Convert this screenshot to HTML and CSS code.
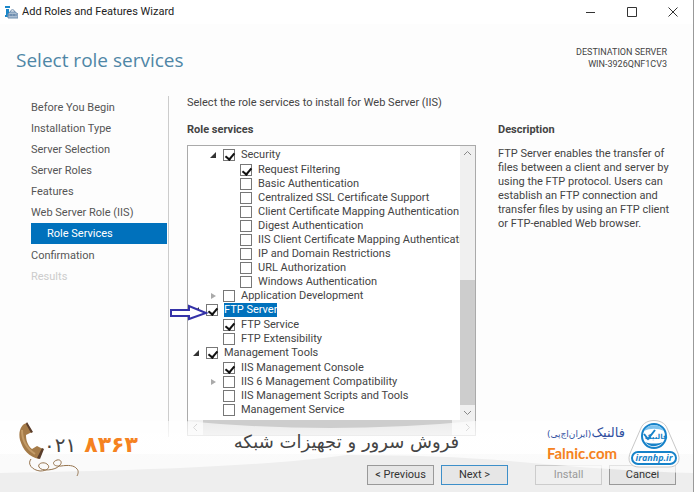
FILE: index.html
```html
<!DOCTYPE html>
<html lang="en">
<head>
  <meta charset="UTF-8" />
  <meta name="viewport" content="width=device-width, initial-scale=1" />
  <title>Add Roles and Features Wizard</title>
  <link rel="stylesheet" href="styles.css">
</head>
<body>
  <div class="window">
    <div class="titlebar">
      <svg class="app-icon" width="14" height="14" viewBox="0 0 14 14">
        <path d="M1 1h5v2H1zM2 4h3v8H1V10h1z" fill="#1b87c9" />
        <path d="M4 9l2-2h5l3 2v4H4z" fill="#a9bdd2" stroke="#6f8fb0" />
        <path d="M6 7c1-3 4-3 5 0M4 10h9M7 9v2M10 9v2" stroke="#5d7fa3" fill="none" />
      </svg>
      <span class="app-name">Add Roles and Features Wizard</span>
      <div class="controls">
        <button type="button" aria-label="Minimize"><svg width="10" height="10" viewBox="0 0 10 10"><path d="M0 5.500h9" /></svg></button>
        <button type="button" aria-label="Maximize"><svg width="10" height="10" viewBox="0 0 10 10"><path d="M.5.5h9v9h-9z" /></svg></button>
        <button type="button" aria-label="Close"><svg width="10" height="10" viewBox="0 0 10 10"><path d="M.5.5l9 9M9.500.5l-9 9" /></svg></button>
      </div>
    </div>

    <header class="header">
      <h1>Select role services</h1>
      <p class="server">DESTINATION SERVER<br>WIN-3926QNF1CV3</p>
    </header>

    <main class="content">
      <nav class="steps">
        <a href="#">Before You Begin</a>
        <a href="#">Installation Type</a>
        <a href="#">Server Selection</a>
        <a href="#">Server Roles</a>
        <a href="#">Features</a>
        <a href="#">Web Server Role (IIS)</a>
        <a href="#" class="current">Role Services</a>
        <a href="#">Confirmation</a>
        <a href="#" class="disabled">Results</a>
      </nav>

      <section class="roles">
        <p class="intro">Select the role services to install for Web Server (IIS)</p>
        <h2>Role services</h2>
        <div class="listbox">
          <ul class="tree">
            <li class="level-2">
              <div class="row"><span class="arrow open"></span><label><input type="checkbox" checked><span>Security</span></label></div>
              <ul>
                <li><label><input type="checkbox" checked><span>Request Filtering</span></label></li>
                <li><label><input type="checkbox"><span>Basic Authentication</span></label></li>
                <li><label><input type="checkbox"><span>Centralized SSL Certificate Support</span></label></li>
                <li><label><input type="checkbox"><span>Client Certificate Mapping Authentication</span></label></li>
                <li><label><input type="checkbox"><span>Digest Authentication</span></label></li>
                <li><label><input type="checkbox"><span>IIS Client Certificate Mapping Authentication</span></label></li>
                <li><label><input type="checkbox"><span>IP and Domain Restrictions</span></label></li>
                <li><label><input type="checkbox"><span>URL Authorization</span></label></li>
                <li><label><input type="checkbox"><span>Windows Authentication</span></label></li>
              </ul>
            </li>
            <li class="level-2">
              <div class="row"><span class="arrow"></span><label><input type="checkbox"><span>Application Development</span></label></div>
            </li>
            <li>
              <div class="row"><span class="arrow open"></span><label><input type="checkbox" checked><span class="selected">FTP Server</span></label></div>
              <ul>
                <li><label><input type="checkbox" checked><span>FTP Service</span></label></li>
                <li><label><input type="checkbox"><span>FTP Extensibility</span></label></li>
              </ul>
            </li>
            <li>
              <div class="row"><span class="arrow open"></span><label><input type="checkbox" checked><span>Management Tools</span></label></div>
              <ul>
                <li><label><input type="checkbox" checked><span>IIS Management Console</span></label></li>
                <li><div class="row"><span class="arrow"></span><label><input type="checkbox"><span>IIS 6 Management Compatibility</span></label></div></li>
                <li><label><input type="checkbox"><span>IIS Management Scripts and Tools</span></label></li>
                <li><label><input type="checkbox"><span>Management Service</span></label></li>
              </ul>
            </li>
          </ul>
          <div class="scroll-y">
            <svg width="15" height="15" viewBox="0 0 15 15"><path d="M4 9l3.500-3.500L11 9" /></svg>
            <div class="thumb"></div>
            <svg width="15" height="15" viewBox="0 0 15 15"><path d="M4 6l3.500 3.500L11 6" /></svg>
          </div>
          <div class="scroll-x">
            <svg width="15" height="15" viewBox="0 0 15 15"><path d="M9 4L5.500 7.500 9 11" /></svg>
            <div class="thumb"></div>
            <svg width="15" height="15" viewBox="0 0 15 15"><path d="M6 4l3.500 3.500L6 11" /></svg>
          </div>
          <svg class="pointer" width="40" height="18" viewBox="0 0 40 18"><path d="M2 6h18V2l17 7-17 6v-3H2z" /></svg>
        </div>
      </section>

      <aside class="description">
        <h2>Description</h2>
        <p>FTP Server enables the transfer of files between a client and server by using the FTP protocol. Users can establish an FTP connection and transfer files by using an FTP client or FTP-enabled Web browser.</p>
      </aside>
    </main>

    <footer class="footer">
      <button type="button">&lt; Previous</button>
      <button type="button" class="next">Next &gt;</button>
      <button type="button" class="install" disabled>Install</button>
      <button type="button">Cancel</button>
    </footer>

    <div class="banner">
      <svg class="wave" viewBox="0 0 694 66" preserveAspectRatio="none">
        <defs>
          <linearGradient id="fade" x1="0" y1="0" x2="0" y2="1">
            <stop offset="0" stop-color="#fff" stop-opacity="0.6" />
            <stop offset="0.3" stop-color="#fff" stop-opacity="0.8" />
            <stop offset="1" stop-color="#fff" stop-opacity="0.7" />
          </linearGradient>
        </defs>
        <path d="M0 0H185Q330 14 476 0H694V52Q620 50 510 40Q440 34 347 34Q250 48 0 52Z" fill="url(#fade)" />
      </svg>
      <div class="phone">
        <svg width="66" height="56" viewBox="0 0 66 56">
          <path d="M12 38c-4 5 1 11 9 12 8 0 10-4 8-6-3-4-11-2-9 2 2 5 17 3 20-1 4-3 2-7-2-6-6 2-4 7 4 6 7-1 13-1 16 3 2 2 1 5 0 7" fill="none" stroke="#95734d" />
          <path d="M8 2C2 3-1 11 1 19c3 10 9 17 19 19l4-10-6-3-5 3C8 24 7 18 7 14l6-3z" fill="#a57b48" />
          <path d="M8 1l6 10-2 1-5-9zM23 27l2 1-4 10-3-1z" fill="#5a3d2b" />
          <path d="M3 9c0 9 4 18 13 24" fill="none" stroke="#c39b67" stroke-width="2" />
        </svg>
        <span class="area">۰۲۱</span>
        <span class="number">۸۳۶۳</span>
      </div>
      <p class="slogan" lang="fa" dir="rtl">فروش سرور و تجهیزات شبکه</p>
      <div class="brand">
        <div class="brand-text">
          <p lang="fa" dir="rtl">فالنیک<small>(ایران‌اچ‌پی)</small></p>
          <strong>Falnic.com</strong>
        </div>
        <svg class="logo" width="52" height="50" viewBox="0 0 52 50">
          <path d="M13 9C17-1 35-1 39 9l10 23c5 10 0 16-8 16H11C3 48-2 42 3 32z" fill="#fff" stroke="#c8c8c8" />
          <circle cx="26" cy="17" r="12" fill="#fff" stroke="#1682c9" stroke-width="2" />
          <path d="M16 12C19 5 32 4 36 12c-6-3-14-3-20 0z" fill="#7ec3ee" />
          <path d="M17 23c5 6 14 5 18 0-5 2-13 2-18 0z" fill="#1682c9" />
          <path d="M16 15l4 5 7-9" fill="none" stroke="#1682c9" stroke-width="2" />
          <text class="logo-name" x="28" y="20" text-anchor="middle">فالنیک</text>
          <rect x="4" y="33" width="44" height="12" rx="6" fill="#fff" stroke="#1682c9" stroke-width="2" />
          <text x="26" y="42" text-anchor="middle">iranhp.ir</text>
        </svg>
      </div>
    </div>
  </div>
</body>
</html>
```
FILE: styles.css
```css
* {
  box-sizing: border-box;
}
body {
  margin: 0;
  font-family: Roboto, "Open Sans", sans-serif;
  font-size: 11px;
  line-height: 14px;
  color: #444;
  background: #fdfdfd;
}
h1, h2, p, ul {
  margin: 0;
  padding: 0;
}
ul {
  list-style: none;
}
.window {
  position: relative;
  display: flex;
  flex-direction: column;
  min-height: 100vh;
  border-right: 1px solid #999;
}
.titlebar {
  display: flex;
  align-items: center;
  height: 24px;
  padding: 0 15px 0 4px;
  background: #fff;
  color: #222;
}
.app-name {
  margin-left: 4px;
}
.controls {
  display: flex;
  gap: 31px;
  margin-left: auto;
}
.controls button {
  display: flex;
  padding: 0;
  border: 0;
  background: none;
}
.controls svg {
  fill: none;
  stroke: #333;
}
.header {
  display: flex;
  justify-content: space-between;
  padding: 22px 26px 0 16px;
  height: 72px;
}
h1 {
  font-family: "Open Sans", sans-serif;
  font-size: 19px;
  line-height: 28px;
  font-weight: 400;
  color: #4f86a6;
}
.server {
  font-size: 9px;
  line-height: 12px;
  text-align: right;
}
.content {
  display: flex;
  flex: 1;
}
.steps {
  display: flex;
  flex-direction: column;
  width: 169px;
  padding: 1px 1px 0 31px;
  margin-bottom: 17px;
  border-right: 1px solid #ccc;
}
.steps a {
  line-height: 21px;
  color: #555;
  text-decoration: none;
}
.steps .current {
  margin-bottom: 1px;
  padding-left: 16px;
  background: #0071bc;
  color: #fff;
}
.steps .disabled {
  color: #ccc;
}
.roles {
  flex: 0 0 289px;
  margin-left: 18px;
}
h2 {
  font-size: 11px;
  line-height: 14px;
  font-weight: 700;
}
.intro {
  margin-bottom: 13px;
}
.listbox {
  position: relative;
  display: grid;
  grid-template-columns: 1fr 15px;
  grid-template-rows: auto 15px;
  margin-top: 8px;
  border: 1px solid #aaa;
  background: #fff;
}
.tree {
  min-width: 0;
  height: 274px;
  padding: 2px 0 0 18px;
  overflow: hidden;
}
.tree ul {
  padding: 1px 0 0 17px;
}
.level-2 {
  padding-left: 17px;
}
.row {
  position: relative;
}
.tree label {
  display: flex;
  align-items: center;
  height: 14px;
  white-space: nowrap;
}
.tree input {
  appearance: none;
  flex: none;
  width: 12px;
  height: 12px;
  margin: 0 6px 0 0;
  border: 1px solid #777;
  background: #fff;
}
.tree input:checked::before {
  content: "";
  display: block;
  width: 4px;
  height: 7px;
  margin: 1px 0 0 3px;
  border: solid #111;
  border-width: 0 2px 2px 0;
  transform: rotate(40deg);
}
.selected {
  background: #0071bc;
  color: #fff;
}
.arrow {
  position: absolute;
  left: -12px;
  top: 4px;
  border: solid transparent;
  border-width: 3px 0 3px 5px;
  border-left-color: #aaa;
}
.arrow.open {
  left: -13px;
  border-width: 0 0 6px 6px;
  border-color: transparent transparent #333;
}
.pointer {
  position: absolute;
  left: -19px;
  top: 158px;
  fill: #fff;
  stroke: #3432a8;
  stroke-width: 2;
}
.scroll-y, .scroll-x {
  display: flex;
  background: #f0f0f0;
}
.scroll-y {
  flex-direction: column;
}
.scroll-x {
  grid-column: 1 / 3;
}
.listbox svg {
  flex: none;
}
.scroll-y svg, .scroll-x svg {
  fill: none;
  stroke: #888;
}
.scroll-y .thumb {
  height: 125px;
  margin-top: auto;
  background: #cdcdcd;
}
.scroll-x .thumb {
  flex: 1;
  margin-right: 8px;
  background: #cdcdcd;
}
.description {
  flex: 1;
  padding: 27px 16px 0 22px;
}
.description p {
  margin-top: 10px;
}
.footer {
  display: flex;
  justify-content: flex-end;
  gap: 7px;
  padding: 11px 17px 7px;
  background: #eee;
}
.footer button {
  width: 67px;
  height: 20px;
  padding: 0;
  border: 1px solid #999;
  background: #e6e6e6;
  font: inherit;
  color: #333;
}
.footer .next {
  border-color: #3d8fc9;
}
.footer .install {
  margin-left: 20px;
  border-color: #ccc;
  background: #efefef;
  color: #999;
}
.banner {
  position: absolute;
  left: 0;
  right: 0;
  bottom: 5px;
  height: 74px;
  display: flex;
  justify-content: space-between;
  padding: 0 13px 0 19px;
  pointer-events: none;
}
.wave {
  position: absolute;
  left: 0;
  top: 8px;
  width: 100%;
  height: 66px;
}
.phone, .slogan, .brand {
  position: relative;
}
.phone {
  display: flex;
}
.area, .number, .slogan, .brand p {
  font-family: "DejaVu Sans", sans-serif;
}
.phone svg {
  margin-top: 8px;
}
.area {
  margin: 20px 0 0 -41px;
  font-size: 20px;
  line-height: 24px;
}
.number {
  margin: 20px 0 0 8px;
  font-size: 22px;
  line-height: 24px;
  font-weight: 700;
  color: #f58220;
}
.slogan {
  margin: 17px 0 0 8px;
  font-size: 18px;
  line-height: 24px;
}
.brand {
  display: flex;
  gap: 3px;
}
.brand-text {
  margin-top: 10px;
}
.brand p {
  font-size: 13px;
  line-height: 20px;
  color: #2f4f9f;
  white-space: nowrap;
}
.brand small {
  font-size: 9px;
}
.brand strong {
  display: block;
  font-family: Lato, sans-serif;
  font-size: 15px;
  line-height: 18px;
  font-weight: 700;
  color: #f58220;
}
.logo {
  margin-top: 6px;
}
.logo text {
  font: italic 700 9px "Open Sans", sans-serif;
  fill: #1682c9;
}
.logo .logo-name {
  font: 700 7px "DejaVu Sans", sans-serif;
}
```
